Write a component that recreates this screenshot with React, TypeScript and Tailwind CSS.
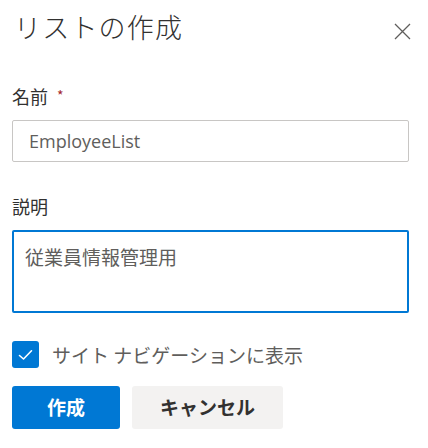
import React from "react";

const jp = { fontFamily: '"Noto Sans CJK JP", "Noto Sans", sans-serif' };

export default function App() {
  return (
    <div
      className="w-[428px] h-[448px] bg-white pl-[12px] pr-[19px] text-[#323130]"
      style={jp}
    >
      <div className="flex items-start justify-between pt-[9px]">
        <h1 className="pl-[2px] text-[27px] leading-[36px] font-light text-[#323130] tracking-[1.2px]">
          リストの作成
        </h1>
        <button className="mt-[13px] mr-[-2px] flex h-[18px] w-[18px] items-center justify-center text-[#605e5c]">
          <svg width="17" height="17" viewBox="0 0 17 17" fill="none" stroke="currentColor" strokeWidth="1.3">
            <path d="M1 1 L16 16 M16 1 L1 16" />
          </svg>
        </button>
      </div>

      <div className="mt-[39px] flex items-center text-[18px] leading-[24px]">
        <span>名前</span>
        <span className="ml-[9px] mt-[-2px] text-[14px] text-[#a4262c]">*</span>
      </div>
      <div className="mt-[12px] flex h-[42px] items-center rounded-[2px] border border-[#c8c6c4] pl-[16px]">
        <span
          className="text-[18px] text-[#605e5c]"
          style={{ fontFamily: '"Open Sans", "Noto Sans", sans-serif' }}
        >
          EmployeeList
        </span>
      </div>

      <div className="mt-[32px] text-[18px] leading-[24px]">説明</div>
      <div className="mt-[12px] h-[83px] rounded-[2px] border-2 border-[#0078d4] pl-[11px] pt-[13px] text-[19px] leading-[24px] text-[#605e5c]">
        従業員情報管理用
      </div>

      <div className="mt-[28px] flex items-center">
        <div className="flex h-[27px] w-[27px] items-center justify-center rounded-[3px] bg-[#0078d4]">
          <svg width="15" height="12" viewBox="0 0 15 12" fill="none" stroke="white" strokeWidth="1.6" strokeLinecap="round" strokeLinejoin="round">
            <path d="M1.5 6.5 L5.5 10 L13.5 1.8" />
          </svg>
        </div>
        <span className="ml-[13px] text-[19px] leading-[24px] text-[#605e5c]">
          サイト ナビゲーションに表示
        </span>
      </div>

      <div className="mt-[18px] flex gap-[12px]">
        <button className="flex h-[43px] w-[108px] items-center justify-center rounded-[3px] bg-[#0078d4] text-[19px] font-bold text-white">
          作成
        </button>
        <button className="flex h-[43px] w-[151px] items-center justify-center rounded-[3px] bg-[#f3f2f1] text-[19px] font-bold text-[#323130]">
          キャンセル
        </button>
      </div>
    </div>
  );
}
